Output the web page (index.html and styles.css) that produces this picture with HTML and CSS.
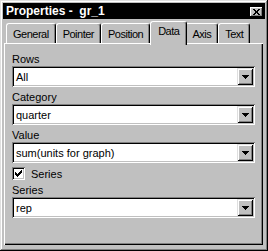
FILE: index.html
```html
<!DOCTYPE html>
<html lang="en">
<head>
  <meta charset="UTF-8">
  <title>Properties - gr_1</title>
  <link rel="stylesheet" href="styles.css">
</head>
<body>
  <div class="window">
    <div class="titlebar">
      <span class="title">Properties -&nbsp; gr_1</span>
      <button class="close">
        <svg width="7" height="6" viewBox="0 0 7 6"><path d="M0 0h2v1H0zM5 0h2v1H5zM1 1h2v1H1zM4 1h2v1H4zM2 2h3v2H2zM1 4h2v1H1zM4 4h2v1H4zM0 5h2v1H0zM5 5h2v1H5z" fill="#000"/></svg>
      </button>
    </div>
    <div class="tabs">
      <div class="tab">General</div>
      <div class="tab">Pointer</div>
      <div class="tab">Position</div>
      <div class="tab active">Data</div>
      <div class="tab">Axis</div>
      <div class="tab">Text</div>
    </div>
    <div class="panel">
      <div class="label">Rows</div>
      <div class="combo">
        <span class="value">All</span>
        <span class="drop"><svg width="7" height="4" viewBox="0 0 7 4"><path d="M0 0h7v1H0zM1 1h5v1H1zM2 2h3v1H2zM3 3h1v1H3z" fill="#000"/></svg></span>
      </div>
      <div class="label">Category</div>
      <div class="combo">
        <span class="value">quarter</span>
        <span class="drop"><svg width="7" height="4" viewBox="0 0 7 4"><path d="M0 0h7v1H0zM1 1h5v1H1zM2 2h3v1H2zM3 3h1v1H3z" fill="#000"/></svg></span>
      </div>
      <div class="label">Value</div>
      <div class="combo">
        <span class="value">sum(units for graph)</span>
        <span class="drop"><svg width="7" height="4" viewBox="0 0 7 4"><path d="M0 0h7v1H0zM1 1h5v1H1zM2 2h3v1H2zM3 3h1v1H3z" fill="#000"/></svg></span>
      </div>
      <label class="check">
        <span class="box"><svg width="7" height="7" viewBox="0 0 7 7"><path d="M6 0h1v3H6zM5 1h1v3H5zM4 2h1v3H4zM3 3h1v3H3zM2 4h1v3H2zM1 3h1v3H1zM0 2h1v3H0z" fill="#000"/></svg></span>
        Series
      </label>
      <div class="label">Series</div>
      <div class="combo">
        <span class="value">rep</span>
        <span class="drop"><svg width="7" height="4" viewBox="0 0 7 4"><path d="M0 0h7v1H0zM1 1h5v1H1zM2 2h3v1H2zM3 3h1v1H3z" fill="#000"/></svg></span>
      </div>
    </div>
  </div>
</body>
</html>
```

FILE: styles.css
```css
body {
  margin: 0;
  font-family: "Liberation Sans", Arial, sans-serif;
  font-size: 11px;
  color: #000;
}

.window {
  width: 268px;
  height: 251px;
  box-sizing: border-box;
  padding: 3px;
  background-color: #c0c0c0;
  box-shadow: inset -1px -1px #000, inset 1px 1px #dfdfdf, inset -2px -2px #808080, inset 2px 2px #fff;
  display: flex;
  flex-direction: column;
}

.titlebar {
  height: 16px;
  background-color: #000;
  color: #fff;
  display: flex;
  align-items: center;
  justify-content: space-between;
  padding: 0 2px 0 3px;
}

.title {
  font-size: 12px;
  font-weight: bold;
}

.close {
  width: 13px;
  height: 10px;
  margin-top: 2px;
  padding: 0;
  border: none;
  background-color: #c0c0c0;
  box-shadow: inset -1px -1px #000, inset 1px 1px #fff, inset -2px -2px #808080;
  display: flex;
  align-items: center;
  justify-content: center;
}

.tabs {
  height: 24px;
  box-sizing: border-box;
  padding-left: 3px;
  display: flex;
  align-items: flex-end;
}

.tab {
  height: 20px;
  box-sizing: border-box;
  padding: 4px 6px 0;
  line-height: 13px;
  letter-spacing: -0.5px;
  border-top: 1px solid #fff;
  border-left: 1px solid #fff;
  border-right: 1px solid #000;
  border-radius: 3px 3px 0 0;
  box-shadow: inset -1px 0 #808080;
  background-color: #c0c0c0;
}

.tab.active {
  height: 24px;
  margin: 0 -2px -2px 0;
  padding: 3px 7px 0;
  position: relative;
  z-index: 1;
}

.panel {
  flex: 1;
  margin: 0 2px 3px 1px;
  padding: 10px 8px 0;
  box-shadow: inset 1px 1px #fff, inset -1px -1px #000, inset -2px -2px #808080;
}

.label {
  line-height: 13px;
}

.combo {
  height: 21px;
  box-sizing: border-box;
  padding: 2px;
  margin-bottom: 4px;
  background-color: #fff;
  box-shadow: inset 1px 1px #808080, inset -1px -1px #fff, inset 2px 2px #000, inset -2px -2px #c0c0c0;
  display: flex;
  align-items: center;
}

.value {
  flex: 1;
  padding-left: 2px;
}

.drop {
  width: 16px;
  height: 17px;
  background-color: #c0c0c0;
  box-shadow: inset 1px 1px #dfdfdf, inset -1px -1px #000, inset 2px 2px #fff, inset -2px -2px #808080;
  display: flex;
  align-items: center;
  justify-content: center;
}

.check {
  display: flex;
  align-items: center;
  gap: 6px;
  height: 13px;
  margin-bottom: 4px;
}

.box {
  width: 13px;
  height: 13px;
  box-sizing: border-box;
  background-color: #fff;
  box-shadow: inset 1px 1px #808080, inset -1px -1px #fff, inset 2px 2px #000, inset -2px -2px #c0c0c0;
  display: flex;
  align-items: center;
  justify-content: center;
}
```
